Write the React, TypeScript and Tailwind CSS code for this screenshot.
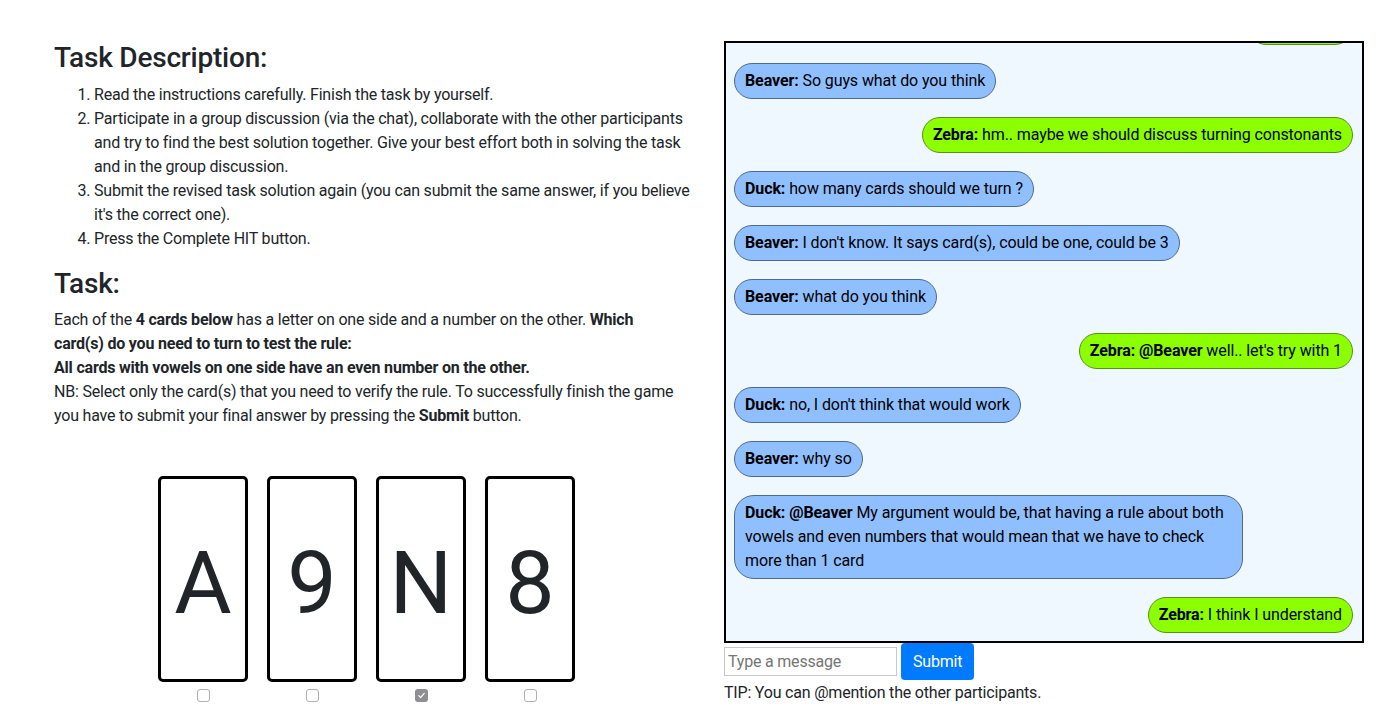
import React from 'react';

type Msg = { who: string; mine?: boolean; mention?: string; text: string };

const messages: Msg[] = [
  { who: 'Zebra', mine: true, text: 'hello' },
  { who: 'Beaver', text: 'So guys what do you think' },
  { who: 'Zebra', mine: true, text: 'hm.. maybe we should discuss turning constonants' },
  { who: 'Duck', text: 'how many cards should we turn ?' },
  { who: 'Beaver', text: "I don't know. It says card(s), could be one, could be 3" },
  { who: 'Beaver', text: 'what do you think' },
  { who: 'Zebra', mine: true, mention: '@Beaver', text: "well.. let's try with 1" },
  { who: 'Duck', text: "no, I don't think that would work" },
  { who: 'Beaver', text: 'why so' },
  {
    who: 'Duck',
    mention: '@Beaver',
    text: 'My argument would be, that having a rule about both vowels and even numbers that would mean that we have to check more than 1 card',
  },
  { who: 'Zebra', mine: true, text: 'I think I understand' },
];

const cards = [
  { label: 'A', checked: false },
  { label: '9', checked: false },
  { label: 'N', checked: true },
  { label: '8', checked: false },
];

// one chat bubble, blue for the others and green for me
const Bubble: React.FC<{ msg: Msg }> = ({ msg }) => (
  <div
    className={
      msg.mine
        ? 'self-end mt-[18px] mr-[9px] max-w-[80%] rounded-[20px] border border-[#5c8f1a] bg-[#8cff00] px-[10px] py-[5px] leading-6 text-black'
        : 'self-start mt-[18px] ml-2 max-w-[80%] rounded-[20px] border border-[#4f6a8c] bg-[#90bfff] px-[10px] py-[5px] leading-6 text-black'
    }
  >
    <b className="font-bold">{msg.who}:</b>{' '}
    {msg.mention && <b className="font-bold">{msg.mention}</b>}
    {msg.mention && ' '}
    {msg.text}
  </div>
);

// disabled looking checkbox under each card
const Check: React.FC<{ checked: boolean }> = ({ checked }) =>
  checked ? (
    <span className="mt-[7px] w-[13px] h-[13px] rounded-[3px] bg-[#8e8e93] flex items-center justify-center">
      <svg width="9" height="9" viewBox="0 0 10 10" fill="none">
        <path d="M2 5.2l2 2.2L8 2.6" stroke="white" strokeWidth="1.4" strokeLinecap="round" strokeLinejoin="round" />
      </svg>
    </span>
  ) : (
    <span className="mt-[7px] w-[13px] h-[13px] rounded-[3px] border border-[#b0b0b0] bg-white" />
  );

export default function App() {
  return (
    <div className="min-h-screen bg-white text-[#212529] font-['Roboto',sans-serif] text-base tracking-[-0.2px]">
      <div className="flex pl-[54px] pt-[41px] gap-[45px]">
        {/* task side */}
        <div className="w-[625px] shrink-0">
          <h3 className="text-[28px] font-medium leading-[1.2] mb-2">Task Description:</h3>
          <ol className="list-decimal pl-10 mb-4 leading-6 -mr-4">
            <li>Read the instructions carefully. Finish the task by yourself.</li>
            <li>
              Participate in a group discussion (via the chat), collaborate with the other participants and try to
              find the best solution together. Give your best effort both in solving the task and in the group
              discussion.
            </li>
            <li>
              Submit the revised task solution again (you can submit the same answer, if you believe it's the
              correct one).
            </li>
            <li>Press the Complete HIT button.</li>
          </ol>
          <h3 className="text-[28px] font-medium leading-[1.2] mb-2">Task:</h3>
          <p className="leading-6 mb-4">
            Each of the <b className="font-bold">4 cards below</b> has a letter on one side and a number on the other.{' '}
            <b className="font-bold">Which card(s) do you need to turn to test the rule:</b>
            <br />
            <b className="font-bold">All cards with vowels on one side have an even number on the other.</b>
            <br />
            NB: Select only the card(s) that you need to verify the rule. To successfully finish the game you have to
            submit your final answer by pressing the <b className="font-bold">Submit</b> button.
          </p>
          <div className="flex justify-center gap-[19px] mt-[48px]">
            {cards.map((c) => (
              <div key={c.label} className="flex flex-col items-center">
                <div className="w-[90px] h-[206px] border-[3px] border-black rounded-[5px] flex items-center justify-center pt-[8px] text-[88px] leading-none tracking-normal">
                  {c.label}
                </div>
                <Check checked={c.checked} />
              </div>
            ))}
          </div>
        </div>

        {/* chat side */}
        <div className="w-[640px] shrink-0">
          <div className="h-[602px] border-2 border-black bg-[#f0f8ff] overflow-hidden flex flex-col justify-end pb-2 tracking-[-0.1px]">
            {messages.map((m, i) => (
              <Bubble key={i} msg={m} />
            ))}
          </div>
          <div className="flex items-center gap-1">
            <input
              type="text"
              placeholder="Type a message"
              className="w-[173px] h-[29px] border border-[#c8c8c8] px-[3px] text-base placeholder:text-[#757575] outline-none"
            />
            <button className="h-[37px] px-3 rounded bg-[#007bff] text-white leading-6">Submit</button>
          </div>
          <p className="leading-6 mt-px">TIP: You can @mention the other participants.</p>
        </div>
      </div>
    </div>
  );
}
